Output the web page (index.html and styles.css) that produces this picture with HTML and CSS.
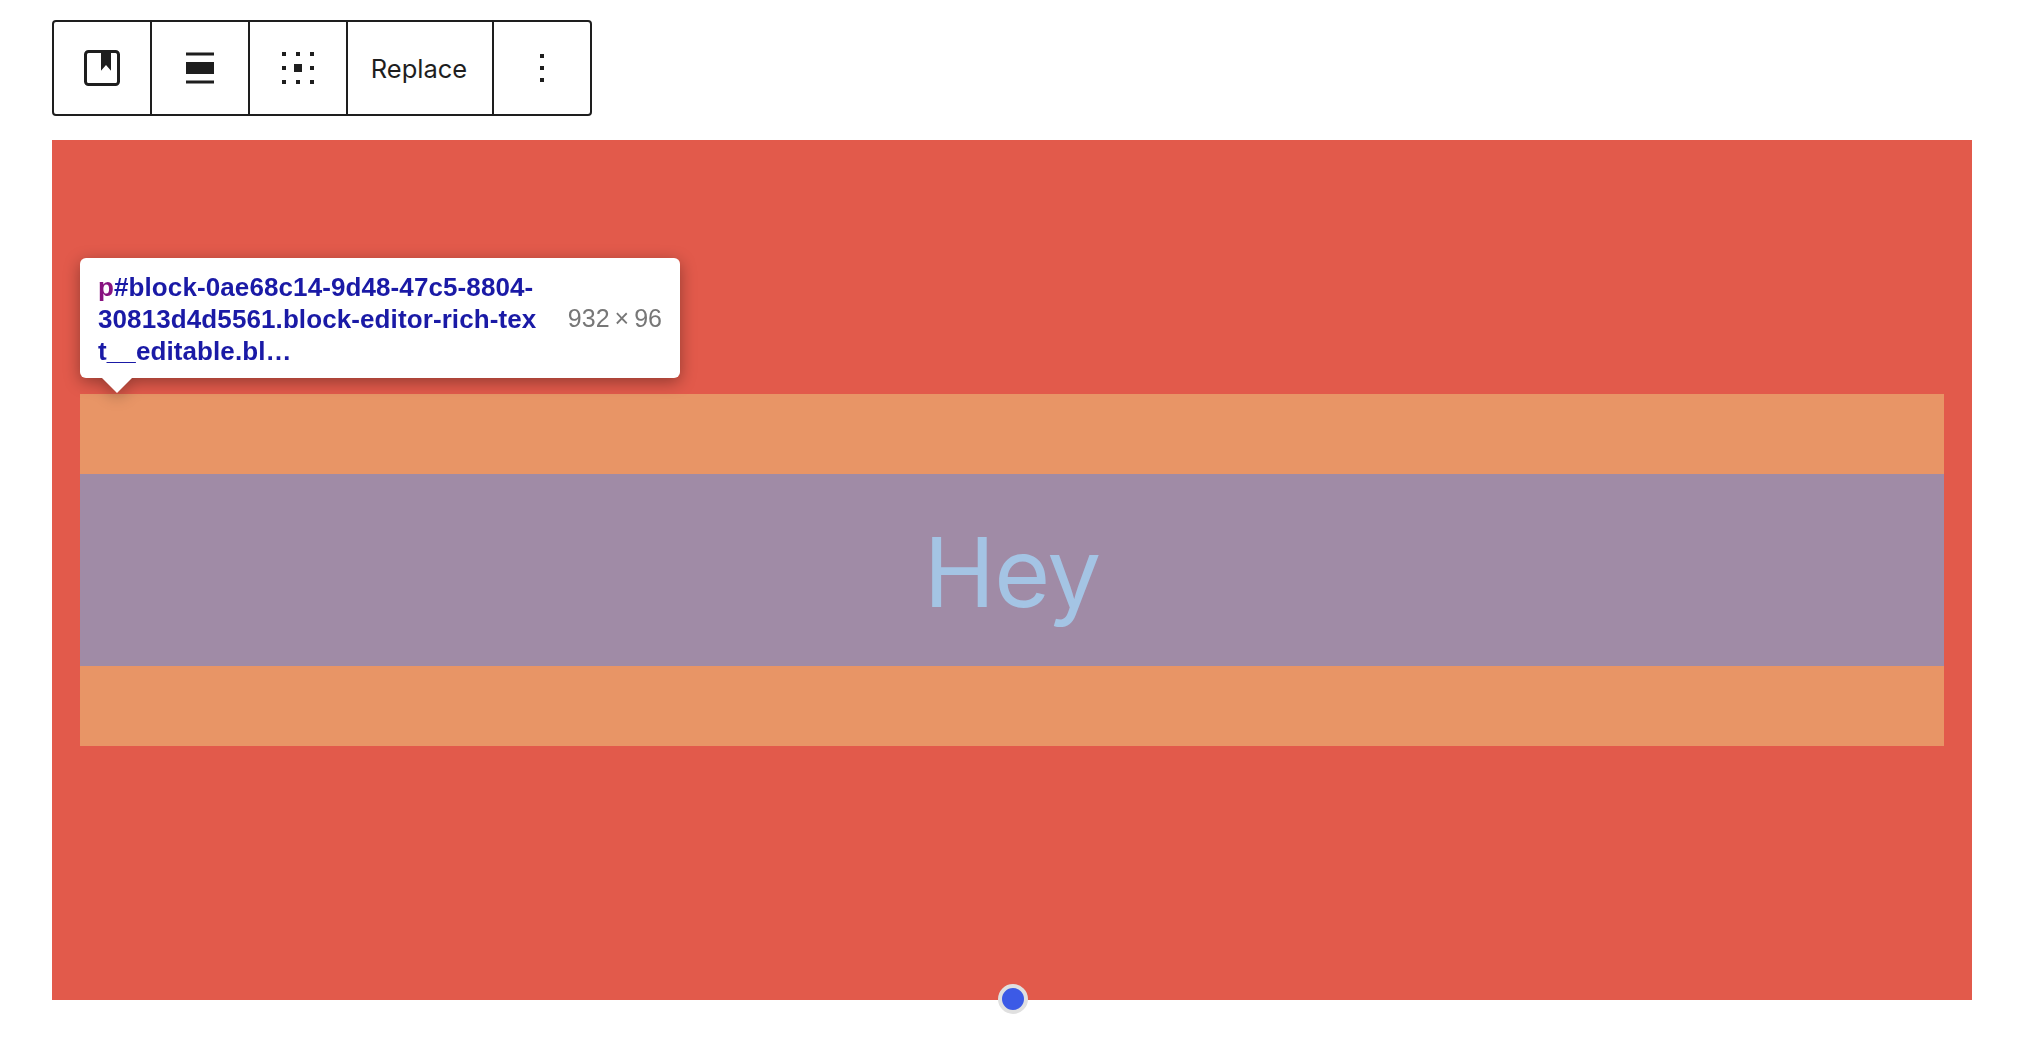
FILE: index.html
```html
<!DOCTYPE html>
<html lang="en">
<head>
  <meta charset="UTF-8" />
  <meta name="viewport" content="width=device-width, initial-scale=1.0"/>
  <title>Cover block</title>
  <link rel="stylesheet" href="styles.css">
</head>
<body>
  <div class="toolbar">
    <button class="tool-button">
      <svg class="icon" viewBox="0 0 24 24">
        <rect x="3.75" y="3.75" width="16.5" height="16.5" rx="1.5" fill="none" stroke="#1e1e1e" stroke-width="1.5"/>
        <path d="M11.5 3.5h5v9.9l-2.5-2.9-2.5 2.9z" fill="#1e1e1e"/>
      </svg>
    </button>
    <button class="tool-button">
      <svg class="icon" viewBox="0 0 24 24">
        <path d="M5 4.3h14v1.4H5zM5 9h14v6H5zM5 18.3h14v1.4H5z" fill="#1e1e1e"/>
      </svg>
    </button>
    <button class="tool-button">
      <svg class="icon" viewBox="0 0 24 24">
        <path d="M4 4h2v2H4zM11 4h2v2h-2zM18 4h2v2h-2zM4 11h2v2H4zM10 10h4v4h-4zM18 11h2v2h-2zM4 18h2v2H4zM11 18h2v2h-2zM18 18h2v2h-2z" fill="#1e1e1e"/>
      </svg>
    </button>
    <button class="tool-button text-button">Replace</button>
    <button class="tool-button">
      <svg class="icon" viewBox="0 0 24 24">
        <path d="M11 5h2v2h-2zM11 11h2v2h-2zM11 17h2v2h-2z" fill="#1e1e1e"/>
      </svg>
    </button>
  </div>

  <div class="cover">
    <div class="cover-inner">
      <p class="cover-text">Hey</p>
    </div>

    <div class="inspect-tip">
      <div class="inspect-path">
        <span class="inspect-tag">p</span>#block-0ae68c14-9d48-47c5-8804-<br>30813d4d5561.block-editor-rich-tex<br>t__editable.bl…
      </div>
      <div class="inspect-size">932&#8201;×&#8201;96</div>
    </div>

    <div class="resize-handle"></div>
  </div>
</body>
</html>
```

FILE: styles.css
```css
html, body {
  height: 100%;
}

body {
  margin: 0;
  padding: 20px 60px 0 52px;
  box-sizing: border-box;
  background: white;
  font-family: Inter, sans-serif;
  color: #1e1e1e;
}

.toolbar {
  display: inline-flex;
  height: 96px;
  box-sizing: border-box;
  border: 2px solid #1e1e1e;
  border-radius: 4px;
  vertical-align: top;
}

.tool-button {
  display: flex;
  align-items: center;
  justify-content: center;
  width: 98px;
  padding: 0;
  background: none;
  border: none;
  border-left: 2px solid #1e1e1e;
  color: inherit;
  font-family: inherit;
}

.tool-button:first-child {
  width: 96px;
  border-left: none;
}

.text-button {
  width: 146px;
  padding: 1px 2px 0 0;
  font-size: 25.5px;
}

.icon {
  width: 48px;
  height: 48px;
}

.cover {
  position: relative;
  display: flex;
  align-items: center;
  height: 860px;
  margin-top: 24px;
  padding: 0 28px;
  background: #e25a4b;
}

.cover-inner {
  flex: 1;
  padding: 80px 0;
  background: #e89566;
}

.cover-text {
  height: 192px;
  margin: 0;
  background: #a08ba6;
  color: #a4c4e4;
  font-size: 96px;
  letter-spacing: -1px;
  line-height: 197px;
  text-align: center;
}

.inspect-tip {
  position: absolute;
  left: 28px;
  top: 118px;
  display: flex;
  align-items: center;
  justify-content: space-between;
  width: 600px;
  height: 120px;
  box-sizing: border-box;
  padding: 14px 18px 12px;
  background: white;
  border-radius: 6px;
  filter: drop-shadow(0 4px 8px rgba(0,0,0,0.35));
  font-family: 'Liberation Sans', sans-serif;
  font-size: 26px;
  line-height: 32px;
}

.inspect-tip::after {
  content: "";
  position: absolute;
  left: 22px;
  top: 120px;
  border-top: 15px solid white;
  border-left: 15px solid transparent;
  border-right: 15px solid transparent;
}

.inspect-path {
  color: #1a1aa6;
  font-weight: bold;
  letter-spacing: 0.1px;
}

.inspect-tag {
  color: #881280;
}

.inspect-size {
  margin-top: -2px;
  color: #777;
  font-size: 25px;
  white-space: nowrap;
}

.resize-handle {
  position: absolute;
  z-index: 2;
  left: 946px;
  bottom: -14px;
  width: 30px;
  height: 30px;
  box-sizing: border-box;
  background: #3c5ae6;
  border: 4px solid #e0e0e0;
  border-radius: 50%;
}
```
